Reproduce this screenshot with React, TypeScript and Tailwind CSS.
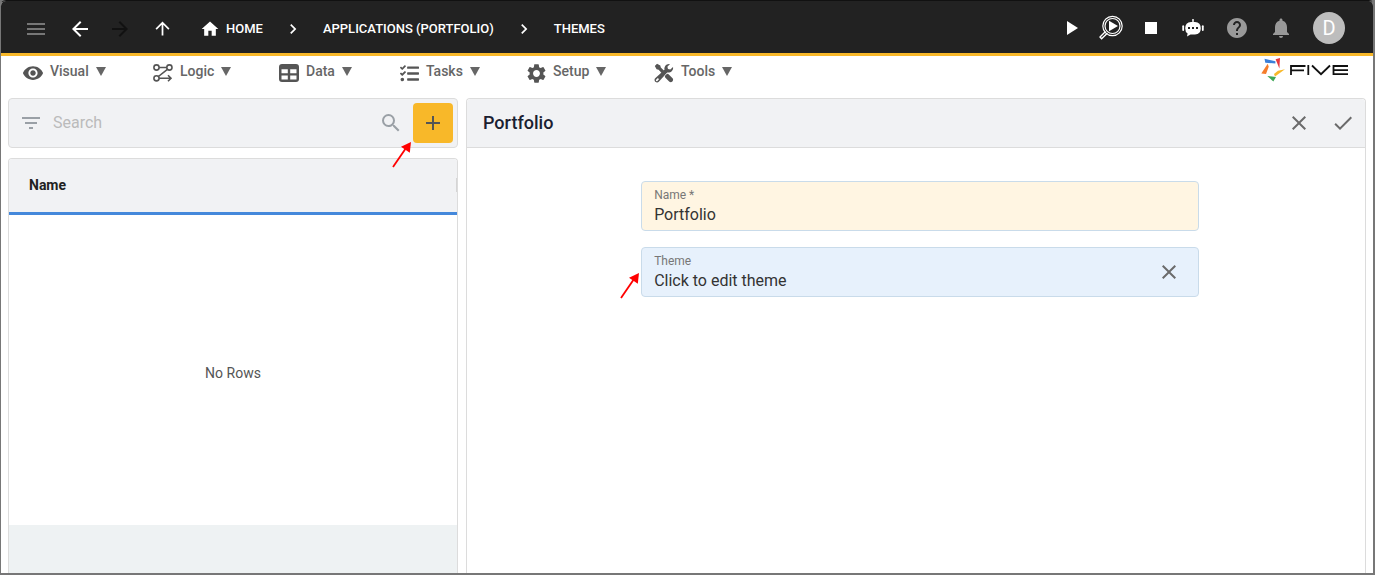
import React from 'react';
import type { ReactNode } from 'react';
import {
  MdMenu, MdArrowBack, MdArrowForward, MdArrowUpward, MdHome, MdChevronRight,
  MdPlayArrow, MdStop, MdHelp, MdNotifications, MdFilterList, MdSearch, MdAdd,
  MdClose, MdCheck, MdVisibility, MdSettings,
} from 'react-icons/md';
import { FaTasks } from 'react-icons/fa';

function LogicIcon() {
  return (
    <svg width="20" height="18" viewBox="0 0 20 18" fill="none" stroke="currentColor" strokeWidth="1.6">
      <circle cx="3.5" cy="3.5" r="2.6" />
      <circle cx="3.5" cy="14.3" r="2.6" />
      <circle cx="16.4" cy="3.5" r="2.6" />
      <path d="M6 3.5H14M14.4 5.3L5.4 12.5M6 14.3H17.5M15 11.3L18 14.3L15 17.3" />
    </svg>
  );
}

function TableIcon() {
  return (
    <svg width="20" height="18" viewBox="0 0 20 18" fill="currentColor">
      <path fillRule="evenodd" d="M3 0H17Q20 0 20 3V15Q20 18 17 18H3Q0 18 0 15V3Q0 0 3 0ZM2.5 5.2V9.2H8.8V5.2ZM11.2 5.2V9.2H17.5V5.2ZM2.5 11.4V15.4H8.8V11.4ZM11.2 11.4V15.4H17.5V11.4Z" />
    </svg>
  );
}

function ToolsIcon() {
  return (
    <svg width="20" height="20" viewBox="0 0 20 20" fill="currentColor">
      <path d="M0.8 3L3 0.8L6.3 2.6L6.8 4.6L10.4 8.1L8.1 10.4L4.6 6.8L2.6 6.3Z" />
      <path d="M11 12.8L12.8 11Q13.9 10.5 14.8 11.4L18.8 15.4Q19.8 17 18.4 18.4Q17 19.8 15.4 18.8L11.4 14.8Q10.5 13.9 11 12.8Z" />
      <path d="M1.2 15.2L10.5 6.8C9.8 3.5 12.5 0.2 16 1L13.4 3.7L14 6L16.3 6.6L19 4C19.8 7.4 16.5 10.2 13.2 9.5L4.8 18.8C3.8 19.8 2.2 19.6 1.3 18.7C0.4 17.8 0.2 16.2 1.2 15.2ZM2.8 16.2A1 1 0 1 0 3.9 17.3A1 1 0 1 0 2.8 16.2Z" fillRule="evenodd" />
    </svg>
  );
}

function InspectIcon() {
  return (
    <svg width="26" height="26" viewBox="0 0 26 26" fill="none" stroke="currentColor">
      <circle cx="14.5" cy="11" r="9.7" strokeWidth="1.2" />
      <circle cx="14.5" cy="11" r="7.5" strokeWidth="1.2" />
      <path d="M7.5 16.5L2 22L3.6 23.8L9.3 18.3" strokeWidth="1.4" />
      <path d="M11 5.8V16.2L20 11Z" fill="currentColor" stroke="none" />
    </svg>
  );
}

function BotIcon() {
  return (
    <svg width="22" height="18" viewBox="0 0 22 18" fill="currentColor">
      <path fillRule="evenodd" d="M10.3 3V1.5A0.9 0.9 0 1 1 11.7 1.5V3H13Q18.8 3.6 18.8 9.2Q18.8 15 13 15.4H8.5L5 17.6L5.6 14.6Q3.2 13 3.2 9.2Q3.2 3.6 9 3ZM6 8V10H8V8ZM10 8V10H12V8ZM14 8V10H16V8Z" />
      <rect x="0.3" y="6.3" width="1.8" height="5.6" rx="0.9" />
      <rect x="19.9" y="6.3" width="1.8" height="5.6" rx="0.9" />
    </svg>
  );
}

function FiveLogo() {
  return (
    <svg width="88" height="24" viewBox="0 0 88 24" role="img" aria-label="Five">
      <path d="M3.5 0.8L14.4 3.2V5.4L4.3 4.8Z" fill="#3b7fd9" />
      <path d="M14.6 1.3L19 0L18.4 10.5Z" fill="#e6393f" />
      <path d="M24 11.2L14 18.4L13 16L17 12.7Z" fill="#f8b829" />
      <path d="M6.3 18L15 19L12.3 23.5Z" fill="#3fa757" />
      <path d="M6.7 5.8L7.7 8.7L5 16L0.3 15.4Z" fill="#f57c2a" />
      <path d="M30 17V8H44.5M30 12.4H43M47.3 7.1V17M51 7.5L60 16.2L69 7.5M87 8H72.5V16.2H87M72.5 12.1H87" fill="none" stroke="#111" strokeWidth="1.8" />
    </svg>
  );
}

function MenuItem({ icon, label, className }: { icon: ReactNode; label: string; className: string }) {
  return (
    <button type="button" className={`flex items-center gap-[7px] text-sm font-medium text-[#666] ${className}`}>
      <span className="flex h-6 w-5 items-center justify-center text-[#555]">{icon}</span>
      <span className="mb-1 flex items-center gap-[7px]">
        {label}
        <svg width="10" height="9" viewBox="0 0 10 9" fill="currentColor"><path d="M0 0H10L5 9Z" /></svg>
      </span>
    </button>
  );
}

function IconButton({ label, children, className = '' }: { label: string; children: ReactNode; className?: string }) {
  return (
    <button type="button" aria-label={label} className={`flex shrink-0 items-center justify-center ${className}`}>
      {children}
    </button>
  );
}

function Arrow() {
  return (
    <svg width="20" height="28" viewBox="0 0 20 28" fill="none">
      <path d="M1 26L14 7" stroke="#f00" strokeWidth="1.8" />
      <path d="M19 1L17.8 11.8L9 5.8Z" fill="#f00" />
    </svg>
  );
}

export default function App() {
  return (
    <div className="bg-[#777] font-['Roboto',sans-serif]">
      <div className="flex h-screen flex-col overflow-hidden rounded-t-md border-t border-r-2 border-b-2 border-l border-t-[#111] border-r-[#777] border-b-[#777] border-l-[#777] bg-white">
        <header className="flex h-[55px] shrink-0 items-center justify-between border-b-3 border-[#f8b829] bg-[#222] text-white">
          <nav className="flex items-center pt-[3px] text-[13px] font-medium">
            <IconButton label="Menu" className="ml-[23px] text-[#777]"><MdMenu size={24} /></IconButton>
            <IconButton label="Back" className="ml-5"><MdArrowBack size={24} /></IconButton>
            <IconButton label="Forward" className="ml-4 text-[#111]"><MdArrowForward size={24} /></IconButton>
            <IconButton label="Up" className="ml-5"><MdArrowUpward size={21} /></IconButton>
            <a href="#home" className="ml-[27px] flex items-center gap-1.5"><MdHome size={20} />HOME</a>
            <MdChevronRight size={20} className="mx-5" />
            <a href="#applications">APPLICATIONS (PORTFOLIO)</a>
            <MdChevronRight size={20} className="mx-5" />
            <a href="#themes">THEMES</a>
          </nav>
          <div className="flex items-center pt-0.5 pr-7">
            <IconButton label="Run" className="w-10"><MdPlayArrow size={24} /></IconButton>
            <IconButton label="Inspect" className="w-10"><InspectIcon /></IconButton>
            <IconButton label="Stop" className="w-10"><MdStop size={24} /></IconButton>
            <IconButton label="Assistant" className="w-11"><BotIcon /></IconButton>
            <IconButton label="Help" className="w-11 text-[#999]"><MdHelp size={24} /></IconButton>
            <IconButton label="Notifications" className="w-11 text-[#999]"><MdNotifications size={24} /></IconButton>
            <button type="button" className="ml-2.5 size-8 rounded-full bg-[#bdbdbd] text-xl">D</button>
          </div>
        </header>

        <div className="flex h-[42px] shrink-0 items-start justify-between pr-6 pl-[22px]">
          <nav className="flex pt-[5px]">
            <MenuItem className="w-[130px]" label="Visual" icon={<MdVisibility size={22} className="shrink-0" />} />
            <MenuItem className="w-[126px]" label="Logic" icon={<LogicIcon />} />
            <MenuItem className="w-[120px]" label="Data" icon={<TableIcon />} />
            <MenuItem className="w-[127px]" label="Tasks" icon={<FaTasks size={19} />} />
            <MenuItem className="w-[128px]" label="Setup" icon={<MdSettings size={23} className="shrink-0" />} />
            <MenuItem className="w-[90px]" label="Tools" icon={<ToolsIcon />} />
          </nav>
          <a href="#five" className="pt-0.5"><FiveLogo /></a>
        </div>

        <main className="flex min-h-0 flex-1 gap-2 px-[7px]">
          <aside className="flex w-[450px] shrink-0 flex-col gap-2.5">
            <div className="relative flex h-[50px] shrink-0 items-center rounded border border-[#dcdcdc] bg-[#f1f2f4] pr-1 pl-2.5">
              <IconButton label="Filter" className="text-[#9aa0a6]"><MdFilterList size={24} /></IconButton>
              <input aria-label="Search" placeholder="Search" className="ml-2.5 min-w-0 flex-1 bg-transparent outline-none placeholder:text-[#bbb]" />
              <IconButton label="Search" className="mr-2.5 text-[#9aa0a6]"><MdSearch size={24} /></IconButton>
              <IconButton label="Add" className="size-10 rounded bg-[#f8b829] text-[#555]"><MdAdd size={24} /></IconButton>
              <div className="pointer-events-none absolute top-[42px] right-[45px]"><Arrow /></div>
            </div>
            <div className="flex min-h-0 flex-1 flex-col overflow-hidden rounded-t border border-b-0 border-[#dcdcdc]">
              <table className="w-full shrink-0 text-left text-sm">
                <thead>
                  <tr className="h-[54px] border-b-3 border-[#4488db] bg-[#f1f2f4]">
                    <th className="pl-5 font-bold text-[#222]"><div className="flex items-center justify-between">Name<span className="h-3.5 w-px bg-[#d5d5d5]" /></div></th>
                  </tr>
                </thead>
              </table>
              <div className="flex min-h-0 flex-1 items-center justify-center pt-1.5 text-sm text-[#555]">No Rows</div>
              <div className="h-12 shrink-0 bg-[#eef2f3]" />
            </div>
          </aside>

          <section className="flex min-w-0 flex-1 flex-col rounded-t border border-b-0 border-[#dcdcdc]">
            <div className="flex h-[49px] shrink-0 items-center justify-between rounded-t border-b border-[#dcdcdc] bg-[#f1f2f4] pr-2.5 pl-4">
              <h1 className="text-lg font-medium text-[#1a2030]">Portfolio</h1>
              <div className="flex gap-5 text-[#6b6b6b]">
                <IconButton label="Cancel"><MdClose size={24} /></IconButton>
                <IconButton label="Save"><MdCheck size={24} /></IconButton>
              </div>
            </div>
            <form className="mx-auto flex w-[63%] flex-col gap-4 pt-[33px] pl-2">
              <div className="flex h-[50px] flex-col rounded border border-[#c9dbea] bg-[#fff5e2] px-3 pt-1">
                <label htmlFor="name" className="text-xs leading-[18px] text-[#777]">Name *</label>
                <input id="name" defaultValue="Portfolio" className="h-[22px] w-full bg-transparent text-[#333] outline-none" />
              </div>
              <div className="relative flex h-[50px] items-center rounded border border-[#c9dbea] bg-[#e7f1fc] pr-[17px] pl-3">
                <div className="flex h-full min-w-0 flex-1 flex-col pt-1">
                  <label htmlFor="theme" className="text-xs leading-[18px] text-[#777]">Theme</label>
                  <input id="theme" readOnly defaultValue="Click to edit theme" className="h-[22px] w-full bg-transparent text-[#333] outline-none" />
                </div>
                <IconButton label="Clear theme" className="text-[#6b6b6b]"><MdClose size={24} /></IconButton>
                <div className="pointer-events-none absolute top-6 -left-[22px]"><Arrow /></div>
              </div>
            </form>
          </section>
        </main>
      </div>
    </div>
  );
}
